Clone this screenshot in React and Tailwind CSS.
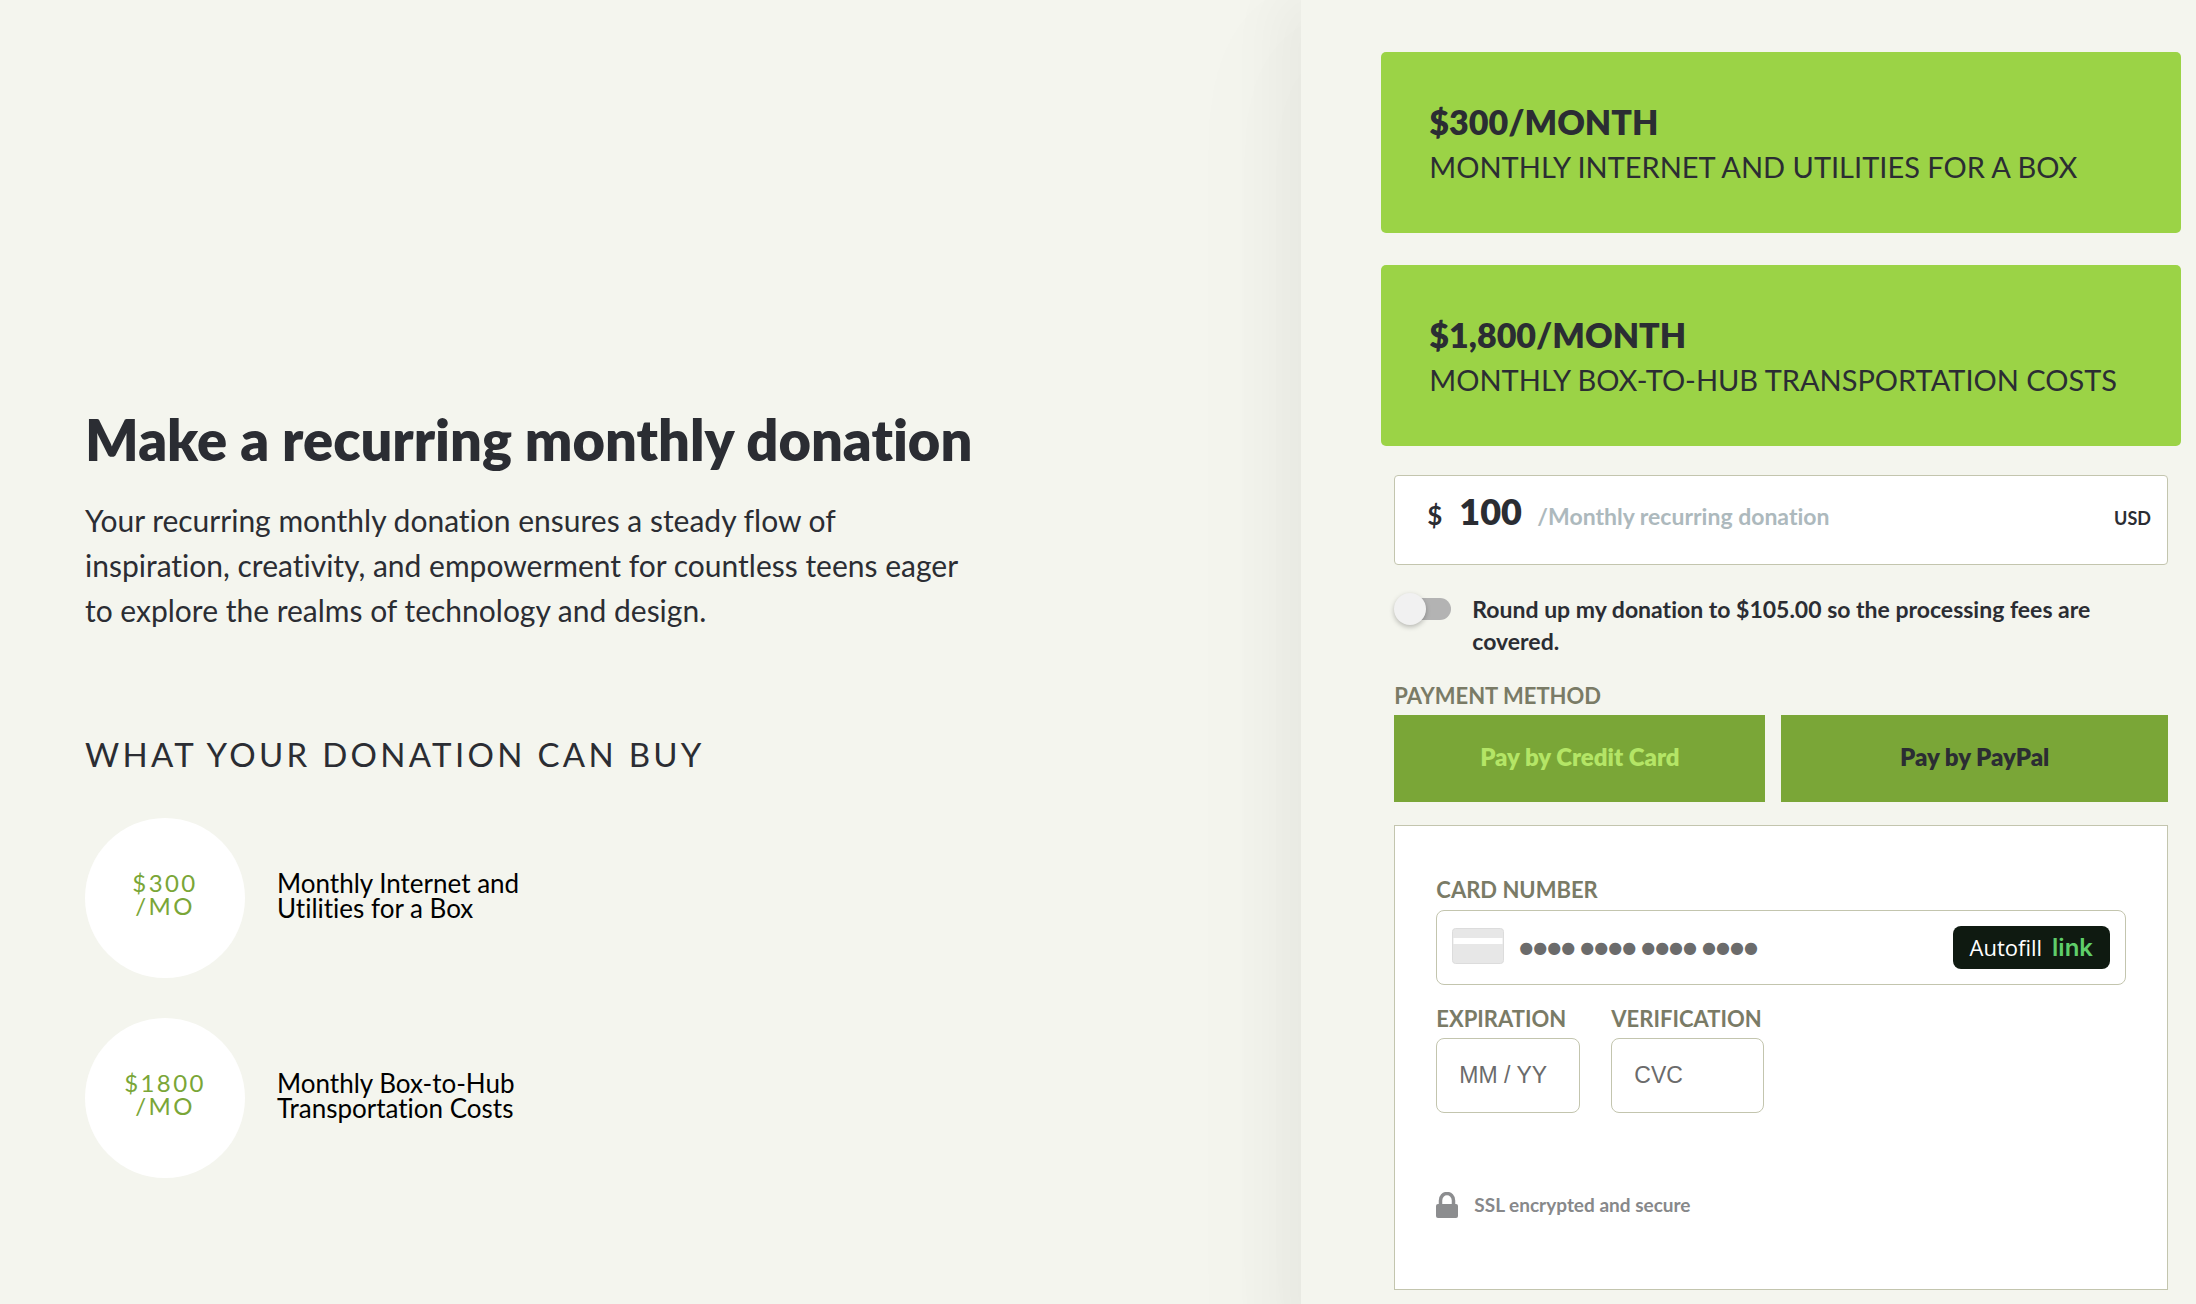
import React, { useState } from 'react';

const donations = [
    { amount: '$300', text: ['Monthly Internet and', 'Utilities for a Box'] },
    { amount: '$1800', text: ['Monthly Box-to-Hub', 'Transportation Costs'] },
];

const plans = [
    { value: '300', price: '$300/MONTH', label: 'MONTHLY INTERNET AND UTILITIES FOR A BOX' },
    { value: '1800', price: '$1,800/MONTH', label: 'MONTHLY BOX-TO-HUB TRANSPORTATION COSTS' },
];

const CardIcon = () => (
    <svg width="52" height="36" viewBox="0 0 52 36" className="mb-1 shrink-0" aria-hidden="true">
        <rect x="0.5" y="0.5" width="51" height="35" rx="3" fill="#e7e7e7" stroke="#dcdcdc" />
        <rect x="1.5" y="10" width="49" height="6" fill="#ffffff" />
    </svg>
);

const LockIcon = () => (
    <svg width="22" height="26" viewBox="0 0 22 26" className="shrink-0" aria-hidden="true">
        <path d="M4.5 13V8.5a6.5 7 0 0 1 13 0V13" fill="none" stroke="#8c8d8f" strokeWidth="3.5" />
        <rect x="0" y="12" width="22" height="14" rx="2" fill="#8c8d8f" />
    </svg>
);

const FieldLabel = ({ htmlFor, children }) => (
    <label htmlFor={htmlFor} className="block text-[22px] leading-7 font-bold text-[#7a7b66]">
        {children}
    </label>
);

const App = () => {
    const [amount, setAmount] = useState('100');
    const [roundUp, setRoundUp] = useState(false);
    const [method, setMethod] = useState('card');

    return (
        <div className="grid grid-cols-[16fr_11fr] min-h-screen overflow-hidden bg-[#f4f5ee] font-['Lato',sans-serif] text-[#2b2d33] [font-variant-ligatures:no-common-ligatures]">
            <section className="pl-[85px] pt-[404px]">
                <h1 className="text-[56px] leading-[72px] font-extrabold">Make a recurring monthly donation</h1>
                <p className="mt-[22px] max-w-[895px] text-[30px] leading-[45px]">
                    Your recurring monthly donation ensures a steady flow of inspiration, creativity, and
                    empowerment for countless teens eager to explore the realms of technology and design.
                </p>
                <h2 className="mt-[97px] text-[33px] leading-[48px] tracking-widest">WHAT YOUR DONATION CAN BUY</h2>
                <ul className="mt-10 flex flex-col gap-10">
                    {donations.map((item) => (
                        <li key={item.amount} className="flex items-center gap-8">
                            <div className="flex size-40 flex-col items-center justify-center rounded-full bg-white pb-2 text-[24px] leading-[23px] tracking-widest text-[#7aa637]">
                                <span>{item.amount}</span>
                                <span>/MO</span>
                            </div>
                            <p className="pb-1 text-[26px] leading-[25px] text-black">
                                {item.text[0]}
                                <br />
                                {item.text[1]}
                            </p>
                        </li>
                    ))}
                </ul>
            </section>

            <section className="bg-[#f4f5ee] pt-[52px] pr-[15px] pb-3 pl-20 shadow-[0_60px_120px_40px_rgba(0,0,0,0.02),0_20px_50px_25px_rgba(0,0,0,0.04)]">
                <div className="flex flex-col gap-8">
                    {plans.map((plan) => (
                        <button
                            key={plan.value}
                            type="button"
                            onClick={() => setAmount(plan.value)}
                            className="rounded-[5px] bg-[#9bd346] px-12 pt-[47px] pb-11 text-left leading-[45px]"
                        >
                            <span className="block text-[34px] font-extrabold">{plan.price}</span>
                            <span className="block text-[29px]">{plan.label}</span>
                        </button>
                    ))}
                </div>

                <form className="mt-[29px] px-[13px]">
                    <div className="flex h-[90px] items-baseline rounded-[4px] border border-[#c3c5ae] bg-white px-4 pt-2.5">
                        <label htmlFor="amount" className="w-8 pl-4 text-[26px] font-bold">$</label>
                        <input
                            id="amount"
                            value={amount}
                            onChange={(e) => setAmount(e.target.value)}
                            className="ml-4 w-[78px] text-[36px] leading-[50px] font-extrabold outline-none"
                        />
                        <span className="text-[23px] font-bold text-[#adb9bd]">/Monthly recurring donation</span>
                        <span className="ml-auto text-[18px] font-bold">USD</span>
                    </div>

                    <div className="mt-7 flex items-start gap-5">
                        <span className="relative flex h-8 w-[58px] shrink-0 items-center">
                            <input
                                id="round-up"
                                type="checkbox"
                                checked={roundUp}
                                onChange={() => setRoundUp(!roundUp)}
                                className="peer ml-1 h-[22px] w-[53px] appearance-none rounded-full bg-[#b3b3b3] checked:bg-[#9bd346]"
                            />
                            <span className="pointer-events-none absolute left-0 size-8 rounded-full bg-[#f1f1f1] shadow-[0_2px_5px_rgba(0,0,0,0.25)] peer-checked:left-6" />
                        </span>
                        <label htmlFor="round-up" className="text-[23px] leading-8 font-bold">
                            Round up my donation to $105.00 so the processing fees are covered.
                        </label>
                    </div>

                    <h3 className="mt-[25px] text-[22px] leading-7 font-bold text-[#7a7b66]">PAYMENT METHOD</h3>
                    <div className="mt-[5px] flex gap-4 text-[24px] font-extrabold">
                        <button
                            type="button"
                            onClick={() => setMethod('card')}
                            className={`h-[87px] grow-[24] basis-0 bg-[#7aa637] pb-1 ${method === 'card' ? 'text-[#b4e566]' : 'text-[#2b2d33]'}`}
                        >
                            Pay by Credit Card
                        </button>
                        <button
                            type="button"
                            onClick={() => setMethod('paypal')}
                            className={`h-[87px] grow-[25] basis-0 bg-[#7aa637] pb-1 ${method === 'paypal' ? 'text-[#b4e566]' : 'text-[#2b2d33]'}`}
                        >
                            Pay by PayPal
                        </button>
                    </div>

                    <div className="mt-[23px] border border-[#c3c5ae] bg-white px-[41px] pt-[50px] pb-[70px]">
                        <FieldLabel htmlFor="card-number">CARD NUMBER</FieldLabel>
                        <div className="mt-1.5 flex h-[75px] items-center gap-[15px] rounded-lg border border-[#c3c5ae] px-[15px]">
                            <CardIcon />
                            <input
                                id="card-number"
                                placeholder="●●●● ●●●● ●●●● ●●●●"
                                className="w-0 grow font-['DejaVu_Sans',sans-serif] text-[16px] outline-none placeholder:text-[#6b6b6b]"
                            />
                            <button
                                type="button"
                                className="flex h-[43px] items-center gap-2.5 rounded-lg bg-[#0f1a11] px-[17px] font-['Open_Sans',sans-serif] text-[22px] text-white"
                            >
                                Autofill <span className="font-['Inter',sans-serif] text-[24px] font-semibold text-[#5fce6a]">link</span>
                            </button>
                        </div>
                        <div className="mt-5 flex gap-[31px]">
                            <div>
                                <FieldLabel htmlFor="expiration">EXPIRATION</FieldLabel>
                                <input
                                    id="expiration"
                                    placeholder="MM / YY"
                                    className="mt-[5px] block h-[75px] w-36 rounded-lg border border-[#c3c5ae] px-[22px] font-['Liberation_Sans',sans-serif] text-[23px] outline-none placeholder:text-[#6b6b6b]"
                                />
                            </div>
                            <div>
                                <FieldLabel htmlFor="cvc">VERIFICATION</FieldLabel>
                                <input
                                    id="cvc"
                                    placeholder="CVC"
                                    className="mt-[5px] block h-[75px] w-[153px] rounded-lg border border-[#c3c5ae] px-[22px] font-['Liberation_Sans',sans-serif] text-[23px] outline-none placeholder:text-[#6b6b6b]"
                                />
                            </div>
                        </div>
                        <div className="mt-[78px] flex items-center gap-4 text-[19px] leading-7 font-bold text-[#87888a]">
                            <LockIcon />
                            SSL encrypted and secure
                        </div>
                    </div>
                </form>
            </section>
        </div>
    );
};

export default App;
